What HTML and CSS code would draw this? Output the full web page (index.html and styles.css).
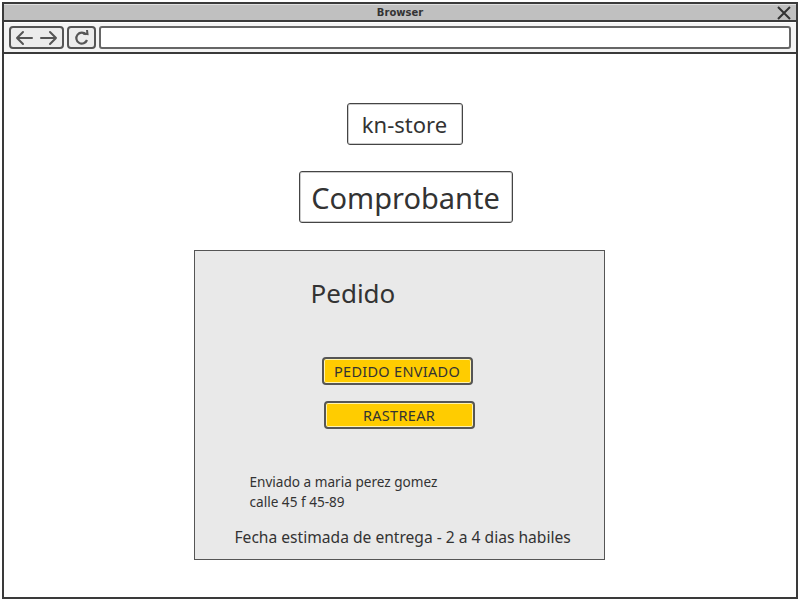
FILE: index.html
```html
<!DOCTYPE html>
<html>
<head>
<meta charset="utf-8">
<link rel="stylesheet" href="styles.css">
</head>
<body>
<div class="window">
  <div class="titlebar">
    <span class="title">Browser</span>
    <svg class="close" width="14" height="14" viewBox="0 0 14 14"><path d="M1 1 L13 13 M13 1 L1 13" stroke="#333" stroke-width="2" fill="none"/></svg>
  </div>
  <div class="toolbar">
    <div class="tbtn nav">
      <svg width="46" height="16" viewBox="0 0 46 16"><path d="M3 8 H18 M3 8 L9 2 M3 8 L9 14" stroke="#555" stroke-width="2" fill="none" stroke-linecap="round"/><path d="M27 8 H42 M42 8 L36 2 M42 8 L36 14" stroke="#555" stroke-width="2" fill="none" stroke-linecap="round"/></svg>
    </div>
    <div class="tbtn reload">
      <svg width="16" height="16" viewBox="0 0 16 16"><path d="M12 4.5 A5.5 5.5 0 1 0 13 10" stroke="#555" stroke-width="2.2" fill="none"/><path d="M9 3.5 L13.5 4 L13 0" stroke="#555" stroke-width="2" fill="none"/></svg>
    </div>
    <div class="address"></div>
  </div>
  <div class="content">
    <div class="box store">kn-store</div>
    <div class="box comp">Comprobante</div>
    <div class="panel">
      <div class="pedido">Pedido</div>
      <div class="btn btn1">PEDIDO ENVIADO</div>
      <div class="btn btn2">RASTREAR</div>
      <div class="addr">Enviado a maria perez gomez<br>calle 45 f 45-89</div>
      <div class="fecha">Fecha estimada de entrega - 2 a 4 dias habiles</div>
    </div>
  </div>
</div>
</body>
</html>
```
FILE: styles.css
```css
html, body { margin: 0; padding: 0; background: #fff; }
body { font-family: "Comic Sans MS", "Noto Sans", sans-serif; color: #333; }
.window {
  box-sizing: border-box;
  margin: 2px 0 0 2px;
  width: 796px;
  height: 597px;
  border: 2px solid #3a3a3a;
  display: flex;
  flex-direction: column;
  overflow: hidden;
}
.titlebar {
  box-sizing: border-box;
  flex: none;
  height: 18px;
  padding-top: 2px;
  background: #c0c0c0;
  border-top: 1px solid #e0e0e0;
  border-bottom: 2px solid #3a3a3a;
  position: relative;
  text-align: center;
  font-family: "DejaVu Sans", sans-serif;
  font-weight: bold;
  font-size: 10px;
  line-height: 12px;
  color: #333;
}
.close { position: absolute; right: 5px; top: 1px; }
.toolbar {
  flex: none;
  height: 29px;
  background: #f4f4f4;
  border-top: 1px solid #fff;
  border-bottom: 2px solid #3a3a3a;
  display: flex;
  align-items: center;
  padding: 0 5px 0 5px;
  gap: 3px;
}
.tbtn {
  box-sizing: border-box;
  height: 23px;
  border: 2px solid #555;
  border-radius: 4px;
  background: #ececec;
  display: flex;
  align-items: center;
  justify-content: center;
}
.nav { width: 55px; }
.reload { width: 29px; }
.address {
  box-sizing: border-box;
  flex: 1;
  height: 23px;
  border: 2px solid #666;
  border-radius: 3px;
  background: #fff;
}
.content {
  flex: 1;
  display: flex;
  flex-direction: column;
  align-items: center;
}
.box {
  box-sizing: border-box;
  border: 1px solid #444;
  border-radius: 3px;
  box-shadow: inset 0 0 0 1px #ccc;
  background: #fff;
  display: flex;
  align-items: center;
  justify-content: center;
  color: #333;
}
.store {
  margin-top: 49px;
  width: 116px;
  height: 42px;
  font-size: 22px;
  margin-left: 9px;
}
.comp {
  margin-top: 26px;
  width: 214px;
  height: 52px;
  font-size: 29px;
  margin-left: 11px;
}
.panel {
  box-sizing: border-box;
  margin-top: 27px;
  margin-left: -2px;
  width: 411px;
  height: 310px;
  background: #e9e9e9;
  border: 1px solid #555;
}
.pedido {
  margin: 24px 0 0 116px;
  font-size: 26px;
  line-height: 36px;
  color: #333;
}
.btn {
  box-sizing: border-box;
  width: 151px;
  height: 28px;
  background: #ffcc00;
  border: 2px solid #555;
  border-radius: 4px;
  box-shadow: inset 0 0 0 1px #fff3b0;
  display: flex;
  align-items: center;
  justify-content: center;
  font-size: 14.5px;
  letter-spacing: 0.3px;
  color: #333;
}
.btn1 { margin: 46px 0 0 127px; }
.btn2 { margin: 16px 0 0 129px; }
.addr {
  margin: 43px 0 0 55px;
  font-size: 13.6px;
  line-height: 20px;
}
.fecha {
  margin: 14px 0 0 40px;
  font-size: 15.6px;
  line-height: 22px;
}
```
